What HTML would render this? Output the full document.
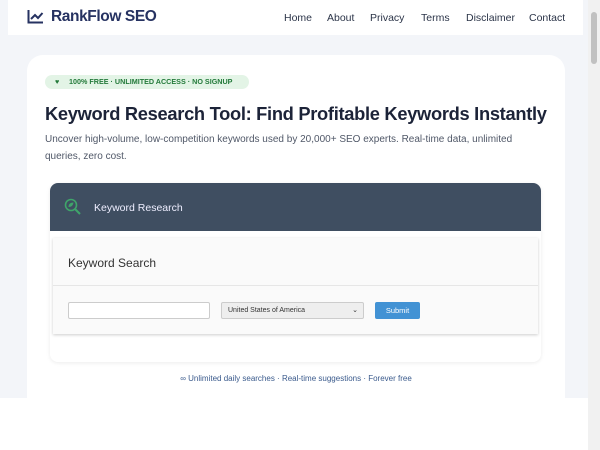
<!DOCTYPE html>
<html><head><meta charset="utf-8"><style>
*{box-sizing:border-box;margin:0;padding:0}
body{width:600px;height:450px;background:#fff;font-family:"Liberation Sans",sans-serif;position:relative;overflow:hidden}
.bg{position:absolute;left:0;top:0;width:588px;height:398px;background:#f3f5f9}
.sb{position:absolute;left:588px;top:0;width:12px;height:450px;background:#f1f1f1}
.sb i{position:absolute;left:3px;top:12px;width:6px;height:52px;background:#c1c1c1;border-radius:3px}
.hdr{position:absolute;left:8px;top:0;width:575px;height:35px;background:#fff}
.logo{position:absolute;top:8px;font-weight:bold;font-size:15.5px;color:#263261;letter-spacing:-0.4px}
.nav{position:absolute;top:12px;font-size:10.5px;color:#2b3448}
.card{position:absolute;left:27px;top:55px;width:538px;height:343px;background:#fff;border-radius:16px 16px 0 0}
.badge{position:absolute;left:18px;top:20px;width:204px;height:14px;background:#e3f4e6;border-radius:7px;color:#237a3a;font-size:7.2px;font-weight:bold;line-height:14px;padding-left:24px;white-space:nowrap}
h1{position:absolute;left:18px;top:48px;font-size:18.3px;color:#1c2338;letter-spacing:-0.3px;white-space:nowrap}
.p{position:absolute;left:18px;top:76px;width:490px;font-size:10px;line-height:17px;color:#505868}
.tool{position:absolute;left:23px;top:128px;width:491px;height:179px;border-radius:8px;background:#fff;box-shadow:0 1px 4px rgba(0,0,0,.08)}
.th{height:48px;background:#3f4e61;border-radius:8px 8px 0 0;color:#eef;font-size:10.5px;line-height:50px;padding-left:44px;position:relative}
.inner{position:absolute;left:3px;top:55px;width:485px;height:96px;background:#fafafa;box-shadow:0 1px 3px rgba(0,0,0,.2)}
.ks{height:48px;border-bottom:1px solid #e6e6e6;font-size:12px;color:#333;line-height:50px;padding-left:15px}
.in{position:absolute;left:15px;top:64px;width:142px;height:17px;border:1px solid #ccc;background:#fff;border-radius:2px}
.sel{position:absolute;left:168px;top:64px;width:143px;height:17px;border:1px solid #ccc;background:#eee;border-radius:2px;font-size:7px;line-height:15px;padding-left:6px;color:#333}
.btn{position:absolute;left:322px;top:64px;width:45px;height:17px;background:#4292d4;border-radius:2px;color:#fff;font-size:7.5px;text-align:center;line-height:17px}
.foot{position:absolute;left:0;width:538px;top:319px;text-align:center;font-size:8px;color:#3a5a8c}
</style></head><body>
<div class="bg"></div>
<div class="hdr">
<svg style="position:absolute;left:19px;top:9px" width="17" height="15" viewBox="0 0 17 15"><path d="M1.5 1v12.5H16" stroke="#263261" stroke-width="2" fill="none"/><path d="M4 10l4-4 3 3 4.5-5" stroke="#263261" stroke-width="2" fill="none"/></svg>
<div class="logo" style="left:43px">RankFlow SEO</div>
<div class="nav" style="left:276px">Home</div>
<div class="nav" style="left:319px">About</div>
<div class="nav" style="left:362px">Privacy</div>
<div class="nav" style="left:413px">Terms</div>
<div class="nav" style="left:458px">Disclaimer</div>
<div class="nav" style="left:521px">Contact</div>
</div>
<div class="card">
<div class="badge"><span style="position:absolute;left:10px;top:0">♥</span>100% FREE · UNLIMITED ACCESS · NO SIGNUP</div>
<h1>Keyword Research Tool: Find Profitable Keywords Instantly</h1>
<div class="p">Uncover high-volume, low-competition keywords used by 20,000+ SEO experts. Real-time data, unlimited queries, zero cost.</div>
<div class="tool">
<div class="th"><svg style="position:absolute;left:14px;top:15px" width="18" height="18" viewBox="0 0 18 18"><circle cx="7" cy="7" r="5.5" stroke="#3fa56a" stroke-width="1.6" fill="none"/><path d="M4.5 9c0-3 2-4.5 5-4.5-0.5 3-2 4.5-5 4.5z" fill="#3fa56a"/><path d="M11 11l5 5" stroke="#3fa56a" stroke-width="2"/></svg>Keyword Research</div>
<div class="inner"><div class="ks">Keyword Search</div>
<div class="in"></div><div class="sel">United States of America<span style="position:absolute;right:5px">⌄</span></div><div class="btn">Submit</div></div>
</div>
<div class="foot">∞ Unlimited daily searches · Real-time suggestions · Forever free</div>
</div>
<div class="sb"><i></i></div>
</body></html>
